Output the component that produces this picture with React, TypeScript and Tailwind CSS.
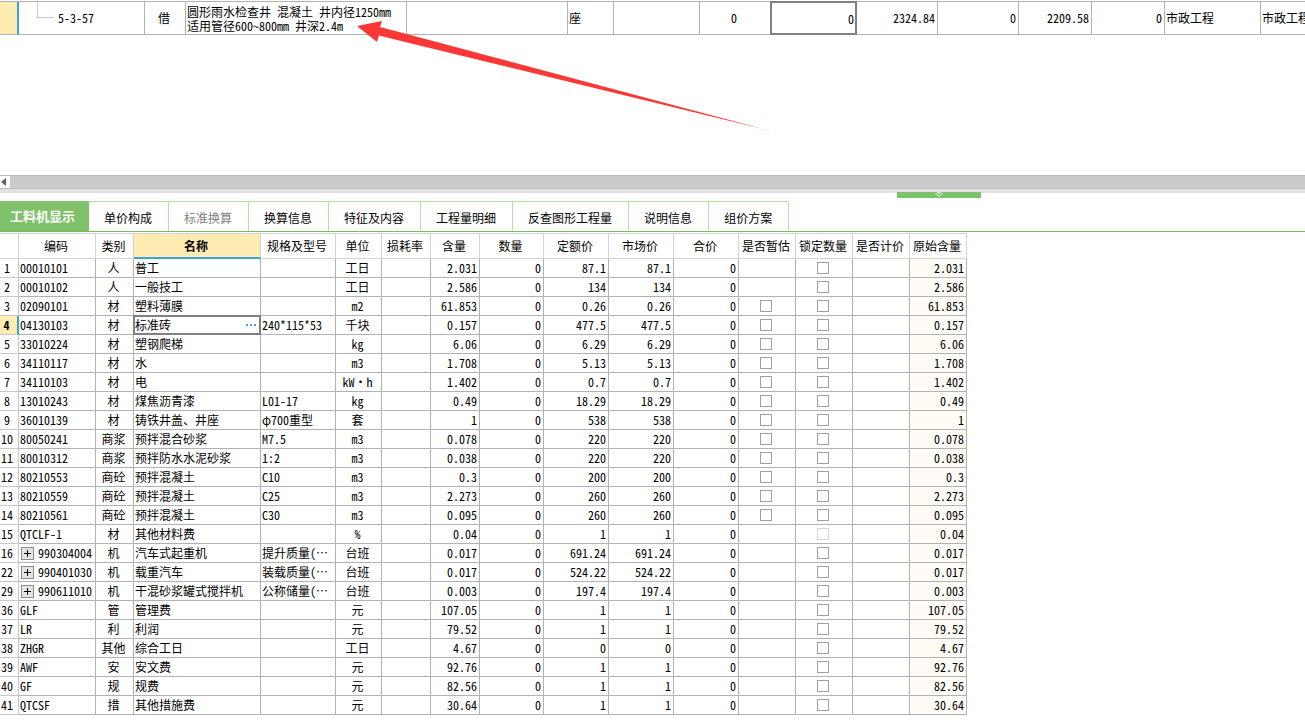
import React from 'react';

interface Material {
  no: number;
  code: string;
  type: string;
  name: string;
  spec?: string;
  unit: string;
  content: string;
  quotaPrice: string;
  marketPrice: string;
  estimate?: boolean;
  lockDisabled?: boolean;
  expandable?: boolean;
}

const tabs = ['工料机显示', '单价构成', '标准换算', '换算信息', '特征及内容', '工程量明细', '反查图形工程量', '说明信息', '组价方案'];

const materials: Material[] = [
  { no: 1, code: '00010101', type: '人', name: '普工', unit: '工日', content: '2.031', quotaPrice: '87.1', marketPrice: '87.1' },
  { no: 2, code: '00010102', type: '人', name: '一般技工', unit: '工日', content: '2.586', quotaPrice: '134', marketPrice: '134' },
  { no: 3, code: '02090101', type: '材', name: '塑料薄膜', unit: 'm2', content: '61.853', quotaPrice: '0.26', marketPrice: '0.26', estimate: true },
  { no: 4, code: '04130103', type: '材', name: '标准砖', spec: '240*115*53', unit: '千块', content: '0.157', quotaPrice: '477.5', marketPrice: '477.5', estimate: true },
  { no: 5, code: '33010224', type: '材', name: '塑钢爬梯', unit: 'kg', content: '6.06', quotaPrice: '6.29', marketPrice: '6.29', estimate: true },
  { no: 6, code: '34110117', type: '材', name: '水', unit: 'm3', content: '1.708', quotaPrice: '5.13', marketPrice: '5.13', estimate: true },
  { no: 7, code: '34110103', type: '材', name: '电', unit: 'kW·h', content: '1.402', quotaPrice: '0.7', marketPrice: '0.7', estimate: true },
  { no: 8, code: '13010243', type: '材', name: '煤焦沥青漆', spec: 'L01-17', unit: 'kg', content: '0.49', quotaPrice: '18.29', marketPrice: '18.29', estimate: true },
  { no: 9, code: '36010139', type: '材', name: '铸铁井盖、井座', spec: 'φ700重型', unit: '套', content: '1', quotaPrice: '538', marketPrice: '538', estimate: true },
  { no: 10, code: '80050241', type: '商浆', name: '预拌混合砂浆', spec: 'M7.5', unit: 'm3', content: '0.078', quotaPrice: '220', marketPrice: '220', estimate: true },
  { no: 11, code: '80010312', type: '商浆', name: '预拌防水水泥砂浆', spec: '1:2', unit: 'm3', content: '0.038', quotaPrice: '220', marketPrice: '220', estimate: true },
  { no: 12, code: '80210553', type: '商砼', name: '预拌混凝土', spec: 'C10', unit: 'm3', content: '0.3', quotaPrice: '200', marketPrice: '200', estimate: true },
  { no: 13, code: '80210559', type: '商砼', name: '预拌混凝土', spec: 'C25', unit: 'm3', content: '2.273', quotaPrice: '260', marketPrice: '260', estimate: true },
  { no: 14, code: '80210561', type: '商砼', name: '预拌混凝土', spec: 'C30', unit: 'm3', content: '0.095', quotaPrice: '260', marketPrice: '260', estimate: true },
  { no: 15, code: 'QTCLF-1', type: '材', name: '其他材料费', unit: '%', content: '0.04', quotaPrice: '1', marketPrice: '1', lockDisabled: true },
  { no: 16, code: '990304004', type: '机', name: '汽车式起重机', spec: '提升质量(…', unit: '台班', content: '0.017', quotaPrice: '691.24', marketPrice: '691.24', expandable: true },
  { no: 22, code: '990401030', type: '机', name: '载重汽车', spec: '装载质量(…', unit: '台班', content: '0.017', quotaPrice: '524.22', marketPrice: '524.22', expandable: true },
  { no: 29, code: '990611010', type: '机', name: '干混砂浆罐式搅拌机', spec: '公称储量(…', unit: '台班', content: '0.003', quotaPrice: '197.4', marketPrice: '197.4', expandable: true },
  { no: 36, code: 'GLF', type: '管', name: '管理费', unit: '元', content: '107.05', quotaPrice: '1', marketPrice: '1' },
  { no: 37, code: 'LR', type: '利', name: '利润', unit: '元', content: '79.52', quotaPrice: '1', marketPrice: '1' },
  { no: 38, code: 'ZHGR', type: '其他', name: '综合工日', unit: '工日', content: '4.67', quotaPrice: '0', marketPrice: '0' },
  { no: 39, code: 'AWF', type: '安', name: '安文费', unit: '元', content: '92.76', quotaPrice: '1', marketPrice: '1' },
  { no: 40, code: 'GF', type: '规', name: '规费', unit: '元', content: '82.56', quotaPrice: '1', marketPrice: '1' },
  { no: 41, code: 'QTCSF', type: '措', name: '其他措施费', unit: '元', content: '30.64', quotaPrice: '1', marketPrice: '1' },
];

const columns = [
  { title: '', width: 'w-[19px]' },
  { title: '编码', width: 'w-[77px]' },
  { title: '类别', width: 'w-[38px]' },
  { title: '名称', width: 'w-[127px]' },
  { title: '规格及型号', width: 'w-[75px]' },
  { title: '单位', width: 'w-[46px]' },
  { title: '损耗率', width: 'w-[49px]' },
  { title: '含量', width: 'w-[49px]' },
  { title: '数量', width: 'w-[64px]' },
  { title: '定额价', width: 'w-[65px]' },
  { title: '市场价', width: 'w-[65px]' },
  { title: '合价', width: 'w-[65px]' },
  { title: '是否暂估', width: 'w-[57px]' },
  { title: '锁定数量', width: 'w-[57px]' },
  { title: '是否计价', width: 'w-[57px]' },
  { title: '原始含量', width: 'w-[57px]' },
];

const cell = 'h-[19px] border-r border-b border-[#b2b2b2] p-0 whitespace-nowrap';
const numberCell = `${cell} pr-0.5 text-right`;
const centerCell = `${cell} pr-0.5 text-center`;
const topCell = 'h-[33px] border-r border-b border-[#b2b2b2] p-0 whitespace-nowrap';

function CheckBox({ label, disabled }: { label: string; disabled?: boolean }) {
  return (
    <input
      type="checkbox"
      aria-label={label}
      disabled={disabled}
      className="mx-auto block size-3 appearance-none border border-[#a0a0a0] bg-white checked:bg-[#80c269] disabled:border-[#d4d4d4]"
    />
  );
}

function QuotaTable() {
  return (
    <table className="w-full table-fixed border-separate border-spacing-0 border-t border-[#b2b2b2]">
      <colgroup>
        <col className="w-[19px]" />
        <col className="w-[126px]" />
        <col className="w-[41px]" />
        <col className="w-[221px]" />
        <col className="w-[161px]" />
        <col className="w-[46px]" />
        <col className="w-[86px]" />
        <col className="w-[71px]" />
        <col className="w-[86px]" />
        <col className="w-[81px]" />
        <col className="w-[81px]" />
        <col className="w-[73px]" />
        <col className="w-[73px]" />
        <col className="w-[96px]" />
        <col />
      </colgroup>
      <tbody>
        <tr>
          <td className="border-r-2 border-b border-r-[#3ca5cf] border-b-[#b2b2b2] bg-[#ffecb3] p-0" />
          <td className={topCell}>
            <div className="flex h-8 items-start pl-[18px]">
              <span className="h-4 w-[17px] border-b border-l border-[#c8c8c8]" />
              <span className="pl-1 leading-8">5-3-57</span>
            </div>
          </td>
          <td className={`${topCell} pr-0.5 text-center`}>借</td>
          <td className={`${topCell} pt-px pl-px leading-[14px]`}>
            圆形雨水检查井 混凝土 井内径1250mm
            <br />
            适用管径600~800mm 井深2.4m
          </td>
          <td className={topCell} />
          <td className={`${topCell} pl-px`}>座</td>
          <td className={topCell} />
          <td className={`${topCell} pr-0.5 text-center`}>0</td>
          <td className="p-0">
            <input
              aria-label="工程量"
              defaultValue="0"
              className="-mt-px -ml-px block h-[34px] w-[calc(100%+1px)] border-2 border-[#808080] pr-px text-right outline-none"
            />
          </td>
          <td className={`${topCell} pr-0.5 text-right`}>2324.84</td>
          <td className={`${topCell} pr-0.5 text-right`}>0</td>
          <td className={`${topCell} pr-0.5 text-right`}>2209.58</td>
          <td className={`${topCell} pr-0.5 text-right`}>0</td>
          <td className={`${topCell} pl-px`}>市政工程</td>
          <td className="overflow-hidden border-b border-[#b2b2b2] p-0 pl-px whitespace-nowrap">市政工程</td>
        </tr>
      </tbody>
    </table>
  );
}

function MaterialTable() {
  return (
    <table className="w-[967px] table-fixed border-separate border-spacing-0 border-t border-[#d3d3d3]">
      <thead>
        <tr>
          {columns.map((column) => (
            <th
              key={column.title}
              className={`${column.width} h-[25px] border-r border-[#d3d3d3] p-0 pr-0.5 whitespace-nowrap ${
                column.title === '名称'
                  ? 'border-b-2 border-b-[#3ca5cf] bg-[#ffecb3] font-bold'
                  : 'border-b font-normal'
              }`}
            >
              {column.title}
            </th>
          ))}
        </tr>
      </thead>
      <tbody>
        {materials.map((item) => {
          const selected = item.no === 4;
          return (
            <tr key={item.no}>
              <th
                className={`h-[19px] border-b border-b-[#c8c8c8] p-0 ${
                  selected
                    ? 'border-r-2 border-r-[#3ca5cf] bg-[#ffecb3] pr-1 font-bold'
                    : 'border-r border-r-[#c8c8c8] pr-1 font-normal'
                }`}
              >
                {item.no}
              </th>
              <td className={`${cell} pl-px`}>
                {item.expandable ? (
                  <div className="flex items-center gap-1 pl-px">
                    <button
                      aria-label={`展开 ${item.code}`}
                      className="flex size-[13px] items-center justify-center border border-[#8c8c8c] bg-[#e4e4e8]"
                    >
                      <svg className="size-[9px]" viewBox="0 0 9 9" stroke="#000" fill="none" shapeRendering="crispEdges">
                        <path d="M1 4.5h7M4.5 1v7" />
                      </svg>
                    </button>
                    <span>{item.code}</span>
                  </div>
                ) : (
                  item.code
                )}
              </td>
              <td className={centerCell}>{item.type}</td>
              {selected ? (
                <td className="p-0">
                  <div className="-mt-px -ml-px flex h-5 items-center border-2 border-[#808080]">
                    <input aria-label="名称" defaultValue={item.name} className="w-full min-w-0 outline-none" />
                    <button aria-label="选择材料" className="flex h-4 shrink-0 items-center gap-0.5 px-[3px]">
                      <span className="size-0.5 bg-[#5b9bd5]" />
                      <span className="size-0.5 bg-[#5b9bd5]" />
                      <span className="size-0.5 bg-[#5b9bd5]" />
                    </button>
                  </div>
                </td>
              ) : (
                <td className={`${cell} pl-px`}>{item.name}</td>
              )}
              <td className={`${cell} overflow-hidden pl-px`}>{item.spec}</td>
              <td className={centerCell}>{item.unit}</td>
              <td className={cell} />
              <td className={numberCell}>{item.content}</td>
              <td className={numberCell}>0</td>
              <td className={numberCell}>{item.quotaPrice}</td>
              <td className={numberCell}>{item.marketPrice}</td>
              <td className={numberCell}>0</td>
              <td className={centerCell}>{item.estimate && <CheckBox label={`${item.name} 是否暂估`} />}</td>
              <td className={centerCell}>
                <CheckBox label={`${item.name} 锁定数量`} disabled={item.lockDisabled} />
              </td>
              <td className={cell} />
              <td className={`${numberCell} bg-[#fffbf5]`}>{item.content}</td>
            </tr>
          );
        })}
      </tbody>
    </table>
  );
}

export default function App() {
  return (
    <div className="relative min-h-screen overflow-hidden bg-white font-['Noto_Sans_Mono_CJK_SC','Liberation_Mono','Noto_Sans_CJK_SC',monospace] text-[12px] leading-[18px] text-black">
      {/* Quota row */}
      <div className="h-[175px] pt-px">
        <QuotaTable />
      </div>

      {/* Horizontal scrollbar */}
      <div className="flex h-[14px] border-y border-[#bcbcbc] bg-[#cbcbcb]">
        <button aria-label="向左滚动" className="flex w-[10px] items-center bg-white pl-px">
          <svg className="h-2 w-[6px]" viewBox="0 0 6 8" fill="#606060">
            <path d="M5 0v8L0 4z" />
          </svg>
        </button>
      </div>
      <div className="h-1 bg-[#e2e2e2]" />

      {/* Panel toggle */}
      <div className="h-[8px] pb-px">
        <button
          aria-label="收起面板"
          className="-mt-px ml-[897px] flex h-[6px] w-[84px] items-start justify-center bg-[#80c269]"
        >
          <svg className="h-[6px] w-[10px]" viewBox="0 0 10 6" fill="none" stroke="#fff">
            <path d="M1.5 1 5 4.5 8.5 1" />
            <path d="M3 0h4L5 2z" fill="#fff" stroke="none" />
          </svg>
        </button>
      </div>

      {/* Tabs */}
      <div className="mt-px flex h-[31px] border-b border-[#76bf60]">
        {tabs.map((tab, index) => (
          <button
            key={tab}
            className={
              index === 0
                ? 'bg-[#80c269] pr-3.5 pl-2.5 text-[13px] font-bold text-white'
                : `border-t border-r border-[#b1e59e] pt-0.5 pr-4 pl-[15px] ${index === 2 ? 'text-[#808080]' : ''}`
            }
          >
            {tab}
          </button>
        ))}
      </div>

      <div className="pt-px">
        <MaterialTable />
      </div>

      {/* Arrow pointing at the quota name */}
      <svg
        className="pointer-events-none absolute top-0 left-0 h-[135px] w-[775px]"
        viewBox="0 0 775 135"
        fill="#fb3838"
      >
        <path d="M357 26 382 21 380 27 400 32.3 771 131 400 40.7 379 35.6 377 42z" />
      </svg>
    </div>
  );
}
